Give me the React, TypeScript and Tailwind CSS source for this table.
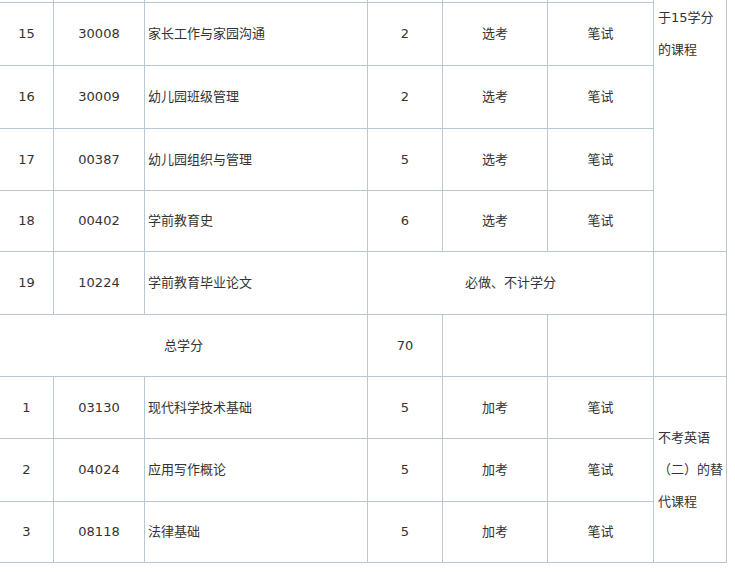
import React from 'react';

const cell = 'bg-white flex items-center justify-center';
const leftCell = 'bg-white flex items-center justify-start pl-[3px]';

interface CourseRow {
    no: string;
    code: string;
    name: string;
    credit: string;
    kind: string;
    exam: string;
}

const topRows: CourseRow[] = [
    { no: '15', code: '30008', name: '家长工作与家园沟通', credit: '2', kind: '选考', exam: '笔试' },
    { no: '16', code: '30009', name: '幼儿园班级管理', credit: '2', kind: '选考', exam: '笔试' },
    { no: '17', code: '00387', name: '幼儿园组织与管理', credit: '5', kind: '选考', exam: '笔试' },
    { no: '18', code: '00402', name: '学前教育史', credit: '6', kind: '选考', exam: '笔试' },
];

const extraRows: CourseRow[] = [
    { no: '1', code: '03130', name: '现代科学技术基础', credit: '5', kind: '加考', exam: '笔试' },
    { no: '2', code: '04024', name: '应用写作概论', credit: '5', kind: '加考', exam: '笔试' },
    { no: '3', code: '08118', name: '法律基础', credit: '5', kind: '加考', exam: '笔试' },
];

const CourseCells: React.FC<{ row: CourseRow }> = ({ row }) => (
    <>
        <div className={cell}>{row.no}</div>
        <div className={cell}>{row.code}</div>
        <div className={leftCell}>{row.name}</div>
        <div className={cell}>{row.credit}</div>
        <div className={cell}>{row.kind}</div>
        <div className={cell}>{row.exam}</div>
    </>
);

const App: React.FC = () => {
    return (
        <div className="w-[735px] h-[572px] overflow-hidden bg-white">
            <div
                className="ml-[-1px] grid gap-px bg-[#b8c8cf] pl-px pr-px pb-px w-max text-[13px] text-[#333] [font-family:'DejaVu_Sans','Noto_Sans_CJK_SC',sans-serif]"
                style={{
                    gridTemplateColumns: '53px 90px 222px 74px 104px 105px 72px',
                    gridTemplateRows: '2px 62px 62px 61px 60px 62px 61px 61px 62px 60px',
                }}
            >
                {/* tail of the row above, scrolled out of view */}
                <div className="bg-white" />
                <div className="bg-white" />
                <div className="bg-white" />
                <div className="bg-white" />
                <div className="bg-white" />
                <div className="bg-white" />
                <div className="bg-white row-span-5 pl-[4px] pt-[2px] leading-[32px]">
                    于15学分
                    <br />
                    的课程
                </div>

                {topRows.slice(0, 1).map((r) => (
                    <CourseCells key={r.no} row={r} />
                ))}
                {topRows.slice(1).map((r) => (
                    <CourseCells key={r.no} row={r} />
                ))}

                {/* 19 */}
                <div className={cell}>19</div>
                <div className={cell}>10224</div>
                <div className={leftCell}>学前教育毕业论文</div>
                <div className={`${cell} col-span-3`}>必做、不计学分</div>
                <div className="bg-white" />

                {/* totals */}
                <div className={`${cell} col-span-3`}>总学分</div>
                <div className={cell}>70</div>
                <div className="bg-white" />
                <div className="bg-white" />
                <div className="bg-white" />

                <CourseCells row={extraRows[0]} />
                <div className="bg-white row-span-3 flex flex-col justify-center pl-[4px] leading-[32px]">
                    <span>不考英语</span>
                    <span>（二）的替</span>
                    <span>代课程</span>
                </div>
                <CourseCells row={extraRows[1]} />
                <CourseCells row={extraRows[2]} />
            </div>
        </div>
    );
};

export default App;
